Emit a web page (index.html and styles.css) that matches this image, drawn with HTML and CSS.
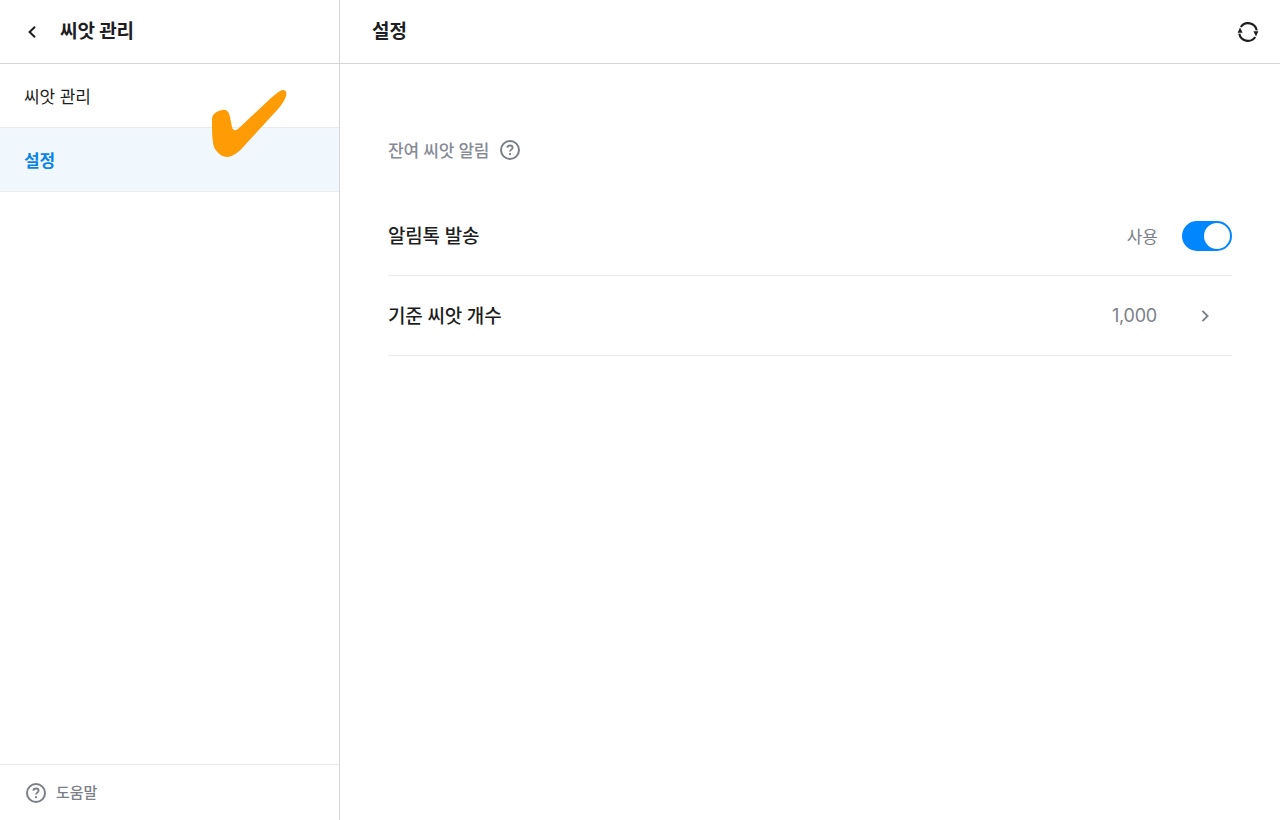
FILE: index.html
```html
<!DOCTYPE html>
<html lang="ko">
<head>
    <meta charset="UTF-8">
    <meta name="viewport" content="width=device-width, initial-scale=1.0">
    <title>씨앗 관리</title>
    <link rel="stylesheet" href="styles.css">
</head>
<body>
    <div class="layout">
        <aside class="sidebar">
            <div class="sidebar-header">
                <svg class="back-icon" width="16" height="16" viewBox="0 0 16 16" fill="none">
                    <path d="M11 2.8 L5.6 8 L11 13.2" stroke="#1c1e21" stroke-width="2"/>
                </svg>
                <span class="sidebar-title">씨앗 관리</span>
            </div>
            <nav class="menu">
                <div class="menu-item">씨앗 관리</div>
                <div class="menu-item active">설정</div>
            </nav>
            <div class="sidebar-footer">
                <svg width="24" height="24" viewBox="0 0 24 24" fill="none">
                    <circle cx="12" cy="12" r="9" stroke="#7b8088" stroke-width="2"/>
                    <path d="M9.4 9.8 C9.4 8.3 10.6 7.5 12 7.5 C13.5 7.5 14.6 8.4 14.6 9.7 C14.6 11.6 12 11.7 12 13.6" stroke="#7b8088" stroke-width="1.8"/>
                    <circle cx="12" cy="16.2" r="1.1" fill="#7b8088"/>
                </svg>
                <span>도움말</span>
            </div>
        </aside>
        <main class="content">
            <div class="content-header">
                <span class="content-title">설정</span>
                <svg width="24" height="24" viewBox="0 0 24 24" fill="none">
                    <path d="M4.8 7 A8.8 8.8 0 0 1 20.7 10.4" stroke="#1c1e21" stroke-width="2.2"/>
                    <path d="M19.2 17 A8.8 8.8 0 0 1 3.3 13.6" stroke="#1c1e21" stroke-width="2.2"/>
                    <path d="M17.4 11.2 L22.4 11.2 L20 16.6 Z" fill="#1c1e21"/>
                    <path d="M1.6 12.8 L6.6 12.8 L4 7.4 Z" fill="#1c1e21"/>
                </svg>
            </div>
            <section class="settings">
                <div class="section-label">
                    <span>잔여 씨앗 알림</span>
                    <svg width="24" height="24" viewBox="0 0 24 24" fill="none">
                        <circle cx="12" cy="12" r="9" stroke="#7b8088" stroke-width="2"/>
                        <path d="M9.4 9.8 C9.4 8.3 10.6 7.5 12 7.5 C13.5 7.5 14.6 8.4 14.6 9.7 C14.6 11.6 12 11.7 12 13.6" stroke="#7b8088" stroke-width="1.8"/>
                        <circle cx="12" cy="16.2" r="1.1" fill="#7b8088"/>
                    </svg>
                </div>
                <div class="setting-row">
                    <span class="setting-name">알림톡 발송</span>
                    <div class="setting-value">
                        <span>사용</span>
                        <div class="toggle"><div class="toggle-knob"></div></div>
                    </div>
                </div>
                <div class="setting-row">
                    <span class="setting-name">기준 씨앗 개수</span>
                    <div class="setting-value with-chevron">
                        <span>1,000</span>
                        <svg width="16" height="16" viewBox="0 0 16 16" fill="none">
                            <path d="M5.4 2.8 L10.6 8 L5.4 13.2" stroke="#7b8088" stroke-width="1.9"/>
                        </svg>
                    </div>
                </div>
            </section>
        </main>
    </div>
    <svg class="check-mark" width="90" height="80" viewBox="0 0 90 80">
        <path d="M3 34 C3 29 8 26 13 25 C18 24 20 27 21 32 L23 42 C24 46 26 46 29 44 L62 13 C67 9 71 5 74 5 C77 5 78 8 77 11 C76 15 73 19 70 23 L36 60 C31 66 24 72 18 72 C13 72 8 68 5 62 C3 55 3 44 3 34 Z" fill="#ff9b05"/>
    </svg>
</body>
</html>
```

FILE: styles.css
```css
* {
    box-sizing: border-box;
}

body {
    margin: 0;
    font-family: Inter, "Noto Sans CJK KR", sans-serif;
    color: #1c1e21;
    background-color: #fff;
    overflow: hidden;
}

.layout {
    display: flex;
    height: 820px;
}

.sidebar {
    width: 340px;
    flex-shrink: 0;
    display: flex;
    flex-direction: column;
    border-right: 1px solid #d4d6d9;
}

.sidebar-header {
    height: 64px;
    display: flex;
    align-items: center;
    gap: 20px;
    padding-left: 24px;
    border-bottom: 1px solid #d4d6d9;
}

.sidebar-title,
.content-title {
    font-size: 19px;
    font-weight: 700;
    line-height: 24px;
    letter-spacing: -0.1px;
    padding-top: 1px;
}

.menu {
    flex: 1;
}

.menu-item {
    height: 64px;
    display: flex;
    align-items: center;
    padding: 0 0 1px 24px;
    font-size: 17px;
    letter-spacing: -0.1px;
    border-bottom: 1px solid #e9ebed;
}

.menu-item.active {
    color: #0a84e8;
    font-weight: 600;
    background-color: #f0f8fe;
}

.sidebar-footer {
    height: 56px;
    display: flex;
    align-items: center;
    gap: 8px;
    padding-left: 24px;
    font-size: 15px;
    font-weight: 500;
    color: #7b8088;
    border-top: 1px solid #e9ebed;
}

.sidebar-footer span {
    padding-bottom: 2px;
}

.content {
    flex: 1;
}

.content-header {
    height: 64px;
    display: flex;
    align-items: center;
    justify-content: space-between;
    padding: 0 20px 0 32px;
    border-bottom: 1px solid #d4d6d9;
}

.settings {
    padding: 72px 48px 0;
}

.section-label {
    height: 28px;
    display: flex;
    align-items: center;
    gap: 9px;
    font-size: 17px;
    font-weight: 500;
    letter-spacing: -0.2px;
    color: #868b94;
}

.section-label span {
    padding-bottom: 1px;
}

.setting-row {
    height: 80px;
    display: flex;
    align-items: center;
    justify-content: space-between;
    border-bottom: 1px solid #e9ebed;
}

.section-label + .setting-row {
    margin-top: 32px;
}

.setting-name {
    font-size: 19px;
    font-weight: 500;
    letter-spacing: -0.2px;
    padding-bottom: 2px;
}

.setting-value {
    display: flex;
    align-items: center;
    gap: 24px;
    font-size: 17px;
    color: #7b8088;
}

.with-chevron {
    gap: 40px;
    font-size: 18px;
    letter-spacing: -0.2px;
    padding-right: 19px;
}

.toggle {
    width: 50px;
    height: 30px;
    padding: 2px;
    display: flex;
    justify-content: flex-end;
    border-radius: 15px;
    background-color: #0086ff;
}

.toggle-knob {
    width: 26px;
    height: 26px;
    border-radius: 50%;
    background-color: #fff;
}

/* hand-drawn mark on top of the screen */
.check-mark {
    position: absolute;
    left: 209px;
    top: 85px;
}
```
